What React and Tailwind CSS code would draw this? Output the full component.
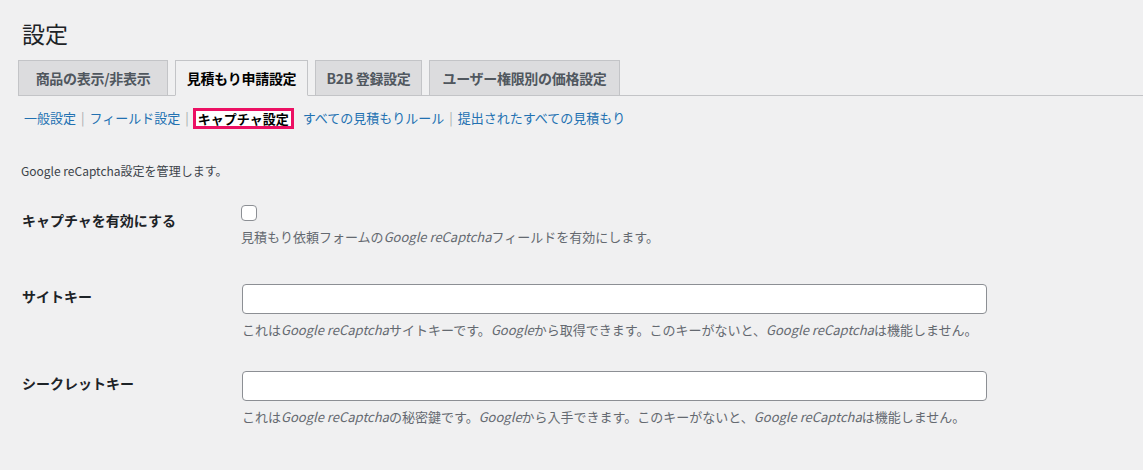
export default function App() {
  const f = { fontFamily: '"Noto Sans CJK JP", "Noto Sans", sans-serif' };
  const tabs = [["商品の表示/非表示", "w-[150px]"], ["見積もり申請設定", "w-[133px]"], ["B2B 登録設定", "w-[107px]"], ["ユーザー権限別の価格設定", "w-[191px]"]];
  return (
    <div style={f} className="w-[1143px] h-[470px] bg-[#f0f0f1] text-[#1d2327] overflow-hidden pl-[18px]">
      <h1 className="text-[23px] leading-[29px] pt-[19px] pl-[4px] font-normal">設定</h1>
      <div className="mt-[12px] flex gap-[7px] border-b border-[#c3c4c7] h-[36px]">
        {tabs.map(([t, w], i) => (
          <div key={t} className={`${w} h-[36px] flex items-center justify-center whitespace-nowrap tracking-[-0.3px] text-[14px] font-semibold border border-[#c3c4c7] ${i === 1 ? "bg-[#f0f0f1] border-b-[#f0f0f1] text-[#000]" : "bg-[#dcdcde] text-[#50575e]"}`}>{t}</div>
        ))}
      </div>
      <div className="mt-[11px] flex items-center text-[13px] pl-[6px] h-[22px]">
        <span className="text-[#2271b1]">一般設定</span>
        <span className="text-[#a7aaad] px-[5px]">|</span>
        <span className="text-[#2271b1]">フィールド設定</span>
        <span className="text-[#a7aaad] px-[5px]">|</span>
        <span className="font-bold text-black border-[3px] border-[#ec1063] bg-white px-[2px] leading-[15px] -ml-[1px]">キャプチャ設定</span>
        <span className="text-[#2271b1] pl-[9px]">すべての見積もりルール</span>
        <span className="text-[#a7aaad] px-[5px]">|</span>
        <span className="text-[#2271b1]">提出されたすべての見積もり</span>
      </div>
      <p className="mt-[33px] text-[12px] text-[#3c434a] pl-[3px]">Google reCaptcha設定を管理します。</p>
      <div className="pl-[4px]">
        <div className="flex mt-[22px]">
          <div className="w-[219px] text-[14px] font-semibold pt-[8px]">キャプチャを有効にする</div>
          <div>
            <div className="w-[16px] h-[16px] border border-[#8c8f94] rounded-[4px] bg-white mt-[3px]"></div>
            <p className="text-[13px] text-[#646970] mt-[6px]">見積もり依頼フォームの<i>Google reCaptcha</i>フィールドを有効にします。</p>
          </div>
        </div>
        <div className="flex mt-[37px]">
          <div className="w-[220px] text-[14px] font-semibold pt-[2px]">サイトキー</div>
          <div>
            <div className="w-[745px] h-[30px] border border-[#8c8f94] rounded-[4px] bg-white"></div>
            <p className="text-[13px] text-[#646970] mt-[6px]">これは<i>Google reCaptcha</i>サイトキーです。<i>Google</i>から取得できます。このキーがないと、<i>Google reCaptcha</i>は機能しません。</p>
          </div>
        </div>
        <div className="flex mt-[32px]">
          <div className="w-[220px] text-[14px] font-semibold pt-[2px]">シークレットキー</div>
          <div>
            <div className="w-[745px] h-[30px] border border-[#8c8f94] rounded-[4px] bg-white"></div>
            <p className="text-[13px] text-[#646970] mt-[6px]">これは<i>Google reCaptcha</i>の秘密鍵です。<i>Google</i>から入手できます。このキーがないと、<i>Google reCaptcha</i>は機能しません。</p>
          </div>
        </div>
      </div>
    </div>
  );
}
